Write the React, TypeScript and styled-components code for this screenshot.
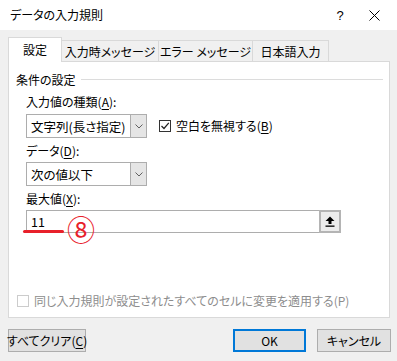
import React from "react";
import styled, { createGlobalStyle } from "styled-components";

const GlobalStyle = createGlobalStyle`
  html, body {
    margin: 0;
    padding: 0;
    background: #f0f0f0;
  }
  body {
    font-family: "Noto Sans CJK JP", "Noto Sans", sans-serif;
    font-size: 12px;
    font-feature-settings: "palt";
    color: #000;
  }
`;

const Window = styled.div`
  width: 397px;
  height: 361px;
  display: flex;
  flex-direction: column;
  background: #f0f0f0;
  overflow: hidden;
`;

const TitleBar = styled.div`
  height: 30px;
  flex: none;
  background: #fff;
  display: flex;
  align-items: center;
  padding-left: 10px;
`;

const Title = styled.span`
  flex: 1;
  font-size: 12px;
  line-height: 16px;
`;

const TitleButton = styled.div<{ $w: number }>`
  width: ${(p) => p.$w}px;
  height: 30px;
  display: flex;
  align-items: center;
  justify-content: center;
  font-family: "Liberation Sans", sans-serif;
  font-size: 13px;
`;

const Body = styled.div`
  flex: 1;
  display: flex;
  flex-direction: column;
  padding: 7px 6px 0 8px;
  border-left: 1px solid #9a9a9a;
  margin-left: -1px;
`;

const TabRow = styled.div`
  display: flex;
  align-items: flex-end;
  height: 25px;
  position: relative;
  z-index: 1;
`;

const Tab = styled.div<{ $w: number; $active?: boolean }>`
  width: ${(p) => p.$w}px;
  height: ${(p) => (p.$active ? 25 : 22)}px;
  box-sizing: border-box;
  border: 1px solid #d9d9d9;
  border-bottom: ${(p) => (p.$active ? "none" : "1px solid #d9d9d9")};
  margin-left: ${(p) => (p.$active ? 0 : -1)}px;
  background: ${(p) => (p.$active ? "#fff" : "#f0f0f0")};
  display: flex;
  align-items: center;
  justify-content: center;
  font-size: 12px;
  white-space: nowrap;
  padding-bottom: ${(p) => (p.$active ? 2 : 0)}px;
  &:first-child {
    margin-left: 0;
  }
`;

const Panel = styled.div`
  height: 257px;
  width: 382px;
  box-sizing: border-box;
  margin-top: -1px;
  background: #fff;
  border: 1px solid #d9d9d9;
  display: flex;
  flex-direction: column;
  padding: 9px 6px 8px 7px;
`;

const GroupHeader = styled.div`
  display: flex;
  align-items: center;
  height: 16px;
  gap: 5px;
  &::after {
    content: "";
    flex: 1;
    height: 1px;
    background: #dcdcdc;
  }
`;

const Fields = styled.div`
  display: flex;
  flex-direction: column;
  padding-left: 10px;
`;

const Label = styled.div<{ $top: number }>`
  height: 16px;
  line-height: 16px;
  margin-top: ${(p) => p.$top}px;
`;

const U = styled.span`
  text-decoration: underline;
  text-underline-offset: 2px;
`;

const Row = styled.div<{ $top: number }>`
  display: flex;
  align-items: center;
  margin-top: ${(p) => p.$top}px;
  gap: 12px;
`;

const Combo = styled.div`
  width: 121px;
  height: 24px;
  box-sizing: border-box;
  border: 1px solid #adadad;
  background: #fff;
  display: flex;
  align-items: stretch;
`;

const ComboText = styled.div`
  flex: 1;
  padding-left: 4px;
  display: flex;
  align-items: center;
  font-size: 12.5px;
`;

const ComboArrow = styled.div`
  width: 15px;
  background: #e5e5e5;
  border-left: 1px solid #adadad;
  display: flex;
  align-items: center;
  justify-content: center;
`;

const Check = styled.div<{ $disabled?: boolean }>`
  width: 12px;
  height: 12px;
  box-sizing: border-box;
  border: 1px solid ${(p) => (p.$disabled ? "#cccccc" : "#333")};
  background: #fff;
  display: flex;
  align-items: center;
  justify-content: center;
  flex: none;
`;

const CheckLabel = styled.label<{ $disabled?: boolean }>`
  display: flex;
  align-items: center;
  gap: 5px;
  color: ${(p) => (p.$disabled ? "#8d8d8d" : "#000")};
  line-height: 16px;
  white-space: nowrap;
`;

const InputWrap = styled.div`
  position: relative;
  margin-top: 3px;
  width: 315px;
  height: 23px;
  box-sizing: border-box;
  border: 1px solid #adadad;
  background: #fff;
  display: flex;
  align-items: stretch;
`;

const InputText = styled.div`
  flex: 1;
  padding-left: 4px;
  display: flex;
  align-items: center;
  font-size: 12.5px;
`;

const RefButton = styled.div`
  width: 22px;
  box-sizing: border-box;
  border: 2px solid #b4b4b4;
  margin: -1px -1px -1px 0;
  background: #ececec;
  display: flex;
  align-items: center;
  justify-content: center;
`;

const RedMark = styled.div`
  position: absolute;
  left: -4px;
  top: 19px;
  width: 41px;
  height: 3px;
  border-radius: 2px;
  background: #e8202a;
`;

const Circled = styled.div`
  position: absolute;
  left: 40px;
  top: 4px;
  font-size: 28px;
  line-height: 28px;
  color: #e8202a;
`;

const Bottom = styled.div`
  margin-top: auto;
  padding-left: 1px;
`;

const ButtonRow = styled.div`
  display: flex;
  align-items: center;
  margin-top: 11px;
  gap: 11px;
`;

const Button = styled.div<{ $w: number; $primary?: boolean }>`
  width: ${(p) => p.$w}px;
  height: 23px;
  box-sizing: border-box;
  border: ${(p) => (p.$primary ? "2px solid #0078d7" : "1px solid #adadad")};
  background: #e1e1e1;
  display: flex;
  align-items: center;
  justify-content: center;
  font-size: 12px;
  white-space: nowrap;
`;

const Spacer = styled.div`
  flex: 1;
`;

const Chevron = () => (
  <svg width="8" height="5" viewBox="0 0 8 5">
    <path d="M0.5 0.5 L4 4 L7.5 0.5" fill="none" stroke="#606060" strokeWidth="1" />
  </svg>
);

const CheckMark = () => (
  <svg width="10" height="10" viewBox="0 0 10 10">
    <path d="M1.5 5 L4 7.5 L8.8 1.8" fill="none" stroke="#222" strokeWidth="1.2" />
  </svg>
);

const CloseIcon = () => (
  <svg width="11" height="11" viewBox="0 0 11 11">
    <path d="M0.5 0.5 L10.5 10.5 M10.5 0.5 L0.5 10.5" stroke="#000" strokeWidth="1" />
  </svg>
);

const UploadIcon = () => (
  <svg width="10" height="11" viewBox="0 0 10 11">
    <path d="M5 0.5 L9.5 5 L6.5 5 L6.5 8 L3.5 8 L3.5 5 L0.5 5 Z" fill="#000" />
    <rect x="0.5" y="9.5" width="9" height="1.3" fill="#000" />
  </svg>
);

export default function App() {
  return (
    <>
      <GlobalStyle />
      <Window>
        <TitleBar>
          <Title>データの入力規則</Title>
          <TitleButton $w={22}>?</TitleButton>
          <TitleButton $w={46}>
            <CloseIcon />
          </TitleButton>
        </TitleBar>
        <Body>
          <TabRow>
            <Tab $w={54} $active>
              設定
            </Tab>
            <Tab $w={98}>入力時メッセージ</Tab>
            <Tab $w={95}>エラー メッセージ</Tab>
            <Tab $w={77}>日本語入力</Tab>
          </TabRow>
          <Panel>
            <GroupHeader>条件の設定</GroupHeader>
            <Fields>
              <Label $top={7}>
                入力値の種類(<U>A</U>):
              </Label>
              <Row $top={4}>
                <Combo>
                  <ComboText>文字列(長さ指定)</ComboText>
                  <ComboArrow>
                    <Chevron />
                  </ComboArrow>
                </Combo>
                <CheckLabel>
                  <Check>
                    <CheckMark />
                  </Check>
                  <span>
                    空白を無視する(<U>B</U>)
                  </span>
                </CheckLabel>
              </Row>
              <Label $top={5}>
                データ(<U>D</U>):
              </Label>
              <Row $top={3}>
                <Combo>
                  <ComboText>次の値以下</ComboText>
                  <ComboArrow>
                    <Chevron />
                  </ComboArrow>
                </Combo>
              </Row>
              <Label $top={5}>
                最大値(<U>X</U>):
              </Label>
              <InputWrap>
                <InputText>11</InputText>
                <RefButton>
                  <UploadIcon />
                </RefButton>
                <RedMark />
                <Circled>⑧</Circled>
              </InputWrap>
            </Fields>
            <Bottom>
              <CheckLabel $disabled>
                <Check $disabled />
                <span>同じ入力規則が設定されたすべてのセルに変更を適用する(P)</span>
              </CheckLabel>
            </Bottom>
          </Panel>
          <ButtonRow>
            <Button $w={78}>
              <span>
                すべてクリア(<U>C</U>)
              </span>
            </Button>
            <Spacer />
            <Button $w={73} $primary>
              OK
            </Button>
            <Button $w={74}>キャンセル</Button>
          </ButtonRow>
        </Body>
      </Window>
    </>
  );
}
